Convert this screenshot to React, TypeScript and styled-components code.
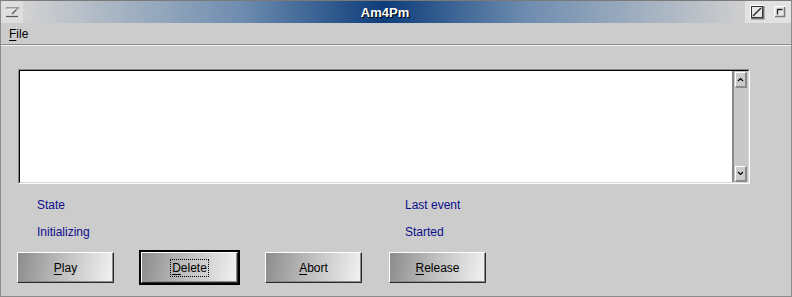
import React from "react";
import styled, { createGlobalStyle } from "styled-components";

const GlobalStyle = createGlobalStyle`
  html, body {
    margin: 0;
    padding: 0;
    background: #cccccc;
  }
  body {
    font-family: "Liberation Sans", Arial, sans-serif;
    font-size: 12px;
  }
`;

const Window = styled.div`
  width: 792px;
  height: 297px;
  box-sizing: border-box;
  border: 1px solid #8c8c8c;
  border-top-color: #7a7a7a;
  background: #cccccc;
  display: flex;
  flex-direction: column;
  overflow: hidden;
`;

const TitleBar = styled.div`
  height: 22px;
  display: flex;
  align-items: stretch;
  flex-shrink: 0;
`;

const TitleIconBox = styled.div`
  width: 22px;
  display: flex;
  align-items: center;
  justify-content: center;
  background: #dedede;
`;

const TitleText = styled.div`
  flex: 1;
  display: flex;
  align-items: center;
  justify-content: center;
  background: linear-gradient(
    to right,
    #d2d2d2 0%,
    #6f8db0 30%,
    #0d3d7a 50%,
    #6f8db0 70%,
    #cfcfcf 100%
  );
  color: #ffffff;
  font-weight: bold;
  font-size: 13px;
  text-shadow: 1px 1px 0 #000000;
  padding-left: 2px;
`;

const TitleButtons = styled.div`
  width: 44px;
  display: flex;
  align-items: center;
  justify-content: space-around;
  background: #e2e2e2;
  padding: 0 1px;
`;

const MenuBar = styled.div`
  height: 21px;
  display: flex;
  align-items: center;
  padding-left: 8px;
  border-bottom: 1px solid #8a8a8a;
  box-shadow: 0 1px 0 #f4f4f4;
  flex-shrink: 0;
`;

const MenuItem = styled.span`
  color: #000000;
  font-size: 12px;
  padding-top: 1px;
`;

const Mnemonic = styled.span`
  text-decoration: underline;
  text-underline-offset: 2px;
`;

const Content = styled.div`
  flex: 1;
  padding: 24px 0 0 16px;
  display: flex;
  flex-direction: column;
`;

const ListBox = styled.div`
  width: 732px;
  height: 115px;
  margin-left: 1px;
  box-sizing: border-box;
  border: 1px solid;
  border-color: #8a8a8a #ffffff #ffffff #8a8a8a;
  display: flex;
`;

const ListInner = styled.div`
  flex: 1;
  display: flex;
  border: 1px solid;
  border-color: #000000 #d8d8d8 #d8d8d8 #000000;
`;

const ListText = styled.div`
  flex: 1;
  background: #ffffff;
`;

const ScrollBar = styled.div`
  width: 13px;
  border-left: 2px solid #8a8a8a;
  background: #c8c8c8;
  display: flex;
  flex-direction: column;
  justify-content: space-between;
  padding: 1px 0 0 1px;
`;

const ScrollButton = styled.div`
  width: 12px;
  height: 16px;
  box-sizing: border-box;
  border-style: solid;
  border-width: 1px 2px 2px 1px;
  border-color: #ffffff #8a8a8a #8a8a8a #ffffff;
  background: #cccccc;
  display: flex;
  align-items: center;
  justify-content: center;
`;

const InfoGrid = styled.div`
  display: grid;
  grid-template-columns: 368px 1fr;
  grid-auto-rows: 14px;
  row-gap: 13px;
  margin-top: 14px;
  padding-left: 20px;
`;

const InfoLabel = styled.span`
  color: #0c0c8a;
  font-size: 12px;
  line-height: 14px;
`;

const ButtonRow = styled.div`
  display: flex;
  gap: 27px;
  margin-top: 13px;
`;

const PushButton = styled.button<{ $isDefault?: boolean }>`
  width: 97px;
  height: 31px;
  box-sizing: border-box;
  margin: 0;
  padding: 0;
  border: 1px solid;
  border-color: #ffffff #2a2a2a #2a2a2a #ffffff;
  box-shadow: inset -1px -1px 0 #8a8a8a
    ${(p) => (p.$isDefault ? ", 0 0 0 2px #000000" : "")};
  background: linear-gradient(100deg, #8c8c8c 0%, #bdbdbd 45%, #f2f2f2 100%);
  color: #000000;
  font-family: "Liberation Sans", Arial, sans-serif;
  font-size: 12px;
  display: flex;
  align-items: center;
  justify-content: center;
`;

const FocusLabel = styled.span<{ $focused?: boolean }>`
  padding: 1px 1px;
  border: 1px dotted ${(p) => (p.$focused ? "#000000" : "transparent")};
`;

const SystemIcon = () => (
  <svg width="16" height="16" viewBox="0 0 16 16">
    <polyline points="2,4 14,4 8,10" fill="none" stroke="#555" strokeWidth="1.2" />
    <line x1="2" y1="12.5" x2="14" y2="12.5" stroke="#555" strokeWidth="1.2" />
    <line x1="3" y1="5" x2="14" y2="5" stroke="#fff" strokeWidth="0.8" />
  </svg>
);

const MaximizeIcon = () => (
  <svg width="15" height="15" viewBox="0 0 15 15">
    <rect x="0.5" y="0.5" width="13" height="13" fill="#e6e6e6" stroke="#fff" />
    <path d="M1 13.5 H13.5 V1" fill="none" stroke="#777" strokeWidth="2" />
    <rect x="1.5" y="1.5" width="11" height="11" fill="none" stroke="#333" />
    <line x1="3" y1="11" x2="11" y2="3" stroke="#222" strokeWidth="1.2" />
  </svg>
);

const IconifyIcon = () => (
  <svg width="12" height="12" viewBox="0 0 12 12">
    <rect x="0.5" y="0.5" width="10" height="10" fill="#e6e6e6" stroke="#fff" />
    <path d="M1 10.5 H10.5 V1" fill="none" stroke="#777" strokeWidth="1.5" />
    <path d="M3.5 8.5 V3.5 H8.5" fill="none" stroke="#222" strokeWidth="1.3" />
  </svg>
);

const ArrowIcon: React.FC<{ up: boolean }> = ({ up }) => (
  <svg width="7" height="5" viewBox="0 0 7 5">
    <polyline
      points={up ? "1,4 3.5,1.5 6,4" : "1,1 3.5,3.5 6,1"}
      fill="none"
      stroke="#000"
      strokeWidth="1.2"
    />
  </svg>
);

const buttons = [
  { label: "Play", isDefault: false },
  { label: "Delete", isDefault: true },
  { label: "Abort", isDefault: false },
  { label: "Release", isDefault: false },
];

export default function App() {
  return (
    <>
      <GlobalStyle />
      <Window>
        <TitleBar>
          <TitleIconBox>
            <SystemIcon />
          </TitleIconBox>
          <TitleText>Am4Pm</TitleText>
          <TitleButtons>
            <MaximizeIcon />
            <IconifyIcon />
          </TitleButtons>
        </TitleBar>
        <MenuBar>
          <MenuItem>
            <Mnemonic>F</Mnemonic>ile
          </MenuItem>
        </MenuBar>
        <Content>
          <ListBox>
            <ListInner>
              <ListText />
              <ScrollBar>
                <ScrollButton>
                  <ArrowIcon up />
                </ScrollButton>
                <ScrollButton>
                  <ArrowIcon up={false} />
                </ScrollButton>
              </ScrollBar>
            </ListInner>
          </ListBox>
          <InfoGrid>
            <InfoLabel>State</InfoLabel>
            <InfoLabel>Last event</InfoLabel>
            <InfoLabel>Initializing</InfoLabel>
            <InfoLabel>Started</InfoLabel>
          </InfoGrid>
          <ButtonRow>
            {buttons.map((b) => (
              <PushButton key={b.label} $isDefault={b.isDefault}>
                <FocusLabel $focused={b.isDefault}>
                  <Mnemonic>{b.label[0]}</Mnemonic>
                  {b.label.slice(1)}
                </FocusLabel>
              </PushButton>
            ))}
          </ButtonRow>
        </Content>
      </Window>
    </>
  );
}
